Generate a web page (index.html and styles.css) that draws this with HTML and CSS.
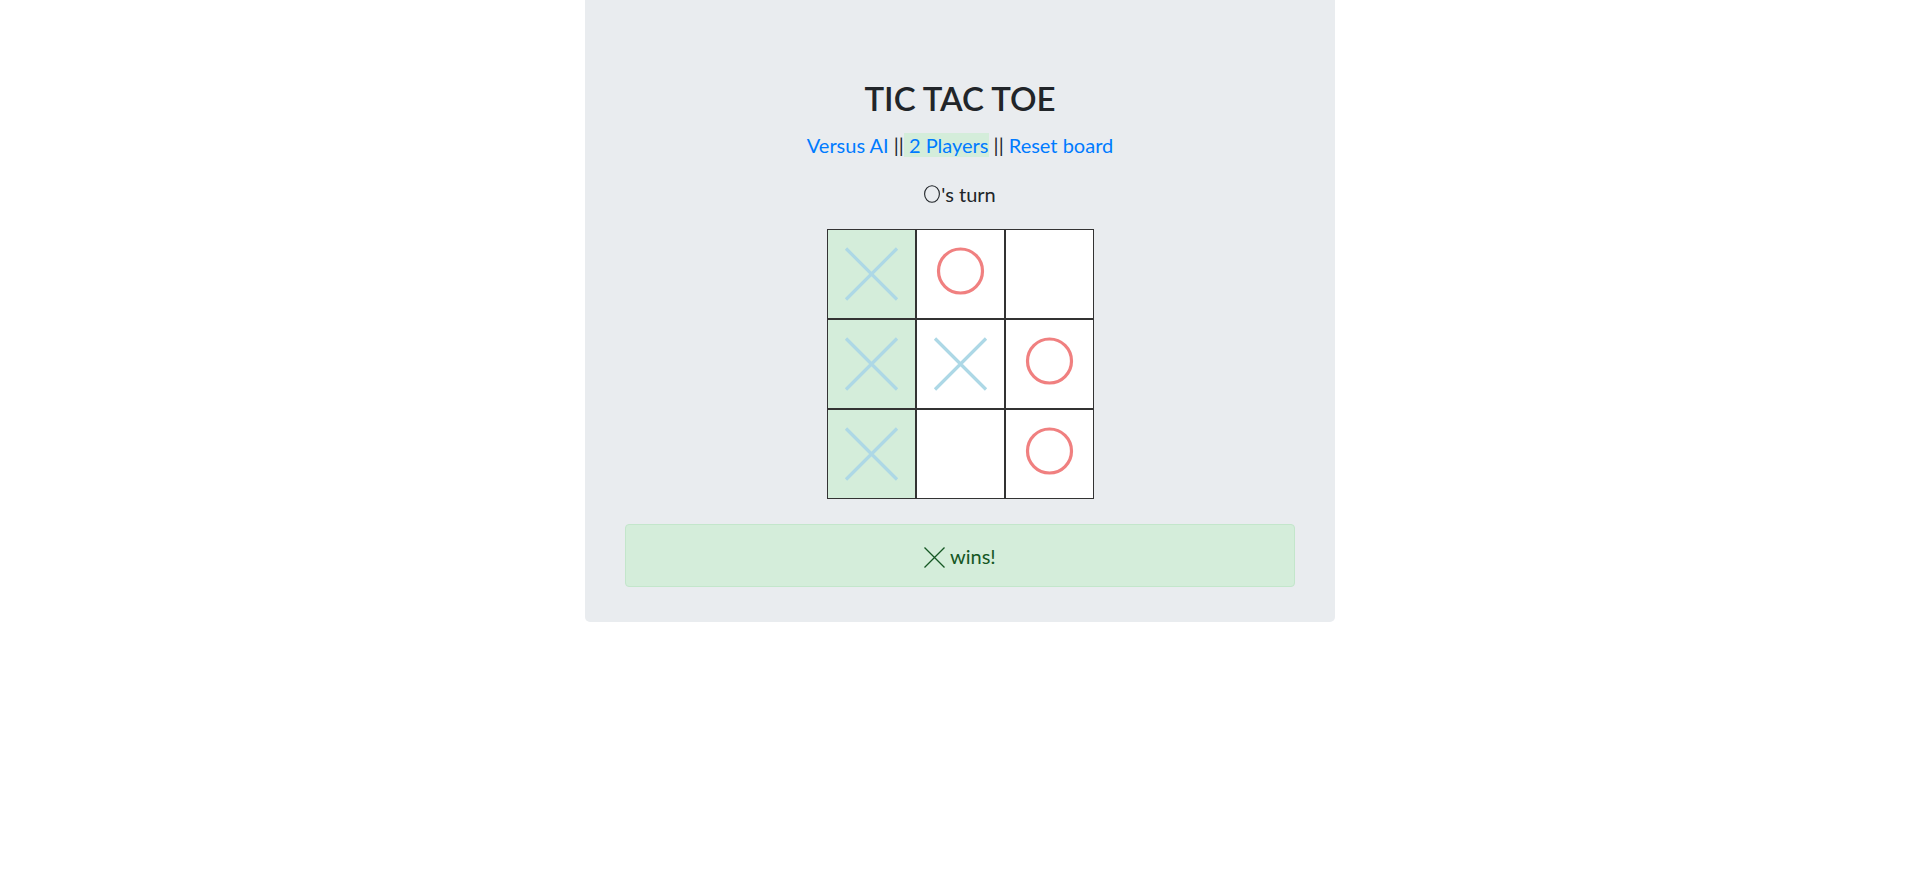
FILE: index.html
```html
<!DOCTYPE html>
<html lang="en">
<head>
<meta charset="utf-8">
<title>Tic Tac Toe</title>
<link rel="stylesheet" href="styles.css">
</head>
<body>
<div class="jumbotron">
  <h1 class="title">TIC TAC TOE</h1>
  <p class="modes"><a class="mode" href="#">Versus AI</a> ||<a class="mode active" href="#"> 2 Players</a> || <a class="mode" href="#">Reset board</a></p>
  <p class="turn"><svg class="turn-o" width="16" height="18" viewBox="0 0 16 18"><ellipse cx="8" cy="9" rx="7.4" ry="8.3" fill="none" stroke="#212529" stroke-width="1.1"/></svg>'s turn</p>
  <div class="board">
    <div class="cell win"><svg class="mark" viewBox="0 0 87 88"><path d="M18 18.5 L69 69.5 M69 18.5 L18 69.5" stroke="#add8e6" stroke-width="3.2" fill="none"/></svg></div>
    <div class="cell"><svg class="mark" viewBox="0 0 87 88"><circle cx="43.5" cy="41" r="22" stroke="#f08080" stroke-width="3.2" fill="none"/></svg></div>
    <div class="cell"></div>
    <div class="cell win"><svg class="mark" viewBox="0 0 87 88"><path d="M18 18.5 L69 69.5 M69 18.5 L18 69.5" stroke="#add8e6" stroke-width="3.2" fill="none"/></svg></div>
    <div class="cell"><svg class="mark" viewBox="0 0 87 88"><path d="M18 18.5 L69 69.5 M69 18.5 L18 69.5" stroke="#add8e6" stroke-width="3.2" fill="none"/></svg></div>
    <div class="cell"><svg class="mark" viewBox="0 0 87 88"><circle cx="43.5" cy="41" r="22" stroke="#f08080" stroke-width="3.2" fill="none"/></svg></div>
    <div class="cell win"><svg class="mark" viewBox="0 0 87 88"><path d="M18 18.5 L69 69.5 M69 18.5 L18 69.5" stroke="#add8e6" stroke-width="3.2" fill="none"/></svg></div>
    <div class="cell"></div>
    <div class="cell"><svg class="mark" viewBox="0 0 87 88"><circle cx="43.5" cy="41" r="22" stroke="#f08080" stroke-width="3.2" fill="none"/></svg></div>
  </div>
  <div class="alert"><svg class="win-x" width="21" height="21" viewBox="0 0 21 21"><path d="M0.5 0.5 L20.5 20.5 M20.5 0.5 L0.5 20.5" stroke="#155724" stroke-width="1.3" fill="none"/></svg> wins!</div>
</div>
</body>
</html>
```
FILE: styles.css
```css
* { box-sizing: border-box; }

html, body {
  margin: 0;
  padding: 0;
  background: #ffffff;
}

body {
  font-family: Lato, "Liberation Sans", sans-serif;
  font-size: 20px;
  line-height: 30px;
  color: #212529;
}

.jumbotron {
  width: 750px;
  margin: 0 auto;
  padding: 78px 40px 35px;
  background: #e9ecef;
  border-radius: 0 0 5px 5px;
  display: flex;
  flex-direction: column;
  align-items: center;
}

.title {
  margin: 0 0 12px;
  font-size: 33px;
  line-height: 40px;
  font-weight: 600;
  letter-spacing: 0;
}

.modes {
  margin: 0 0 19px;
  line-height: 30px;
}

.mode {
  color: #007bff;
  text-decoration: none;
}

.mode.active {
  background: #d4edda;
}

.turn {
  margin: 0 0 20px;
  line-height: 30px;
}

.turn-o {
  vertical-align: -1px;
  margin-right: 1px;
}

.board {
  display: grid;
  grid-template-columns: repeat(3, 89px);
  grid-template-rows: repeat(3, 90px);
}

.cell {
  border: 1px solid #333333;
  background: #ffffff;
  display: flex;
}

.cell.win {
  background: #d4edda;
}

.mark {
  width: 87px;
  height: 88px;
  display: block;
}

.alert {
  align-self: stretch;
  margin-top: 25px;
  padding: 17px 20px 15px;
  line-height: 29px;
  background: #d4edda;
  border: 1px solid #c3e6cb;
  border-radius: 4px;
  color: #155724;
  text-align: center;
}

.win-x {
  vertical-align: -4px;
}
```
